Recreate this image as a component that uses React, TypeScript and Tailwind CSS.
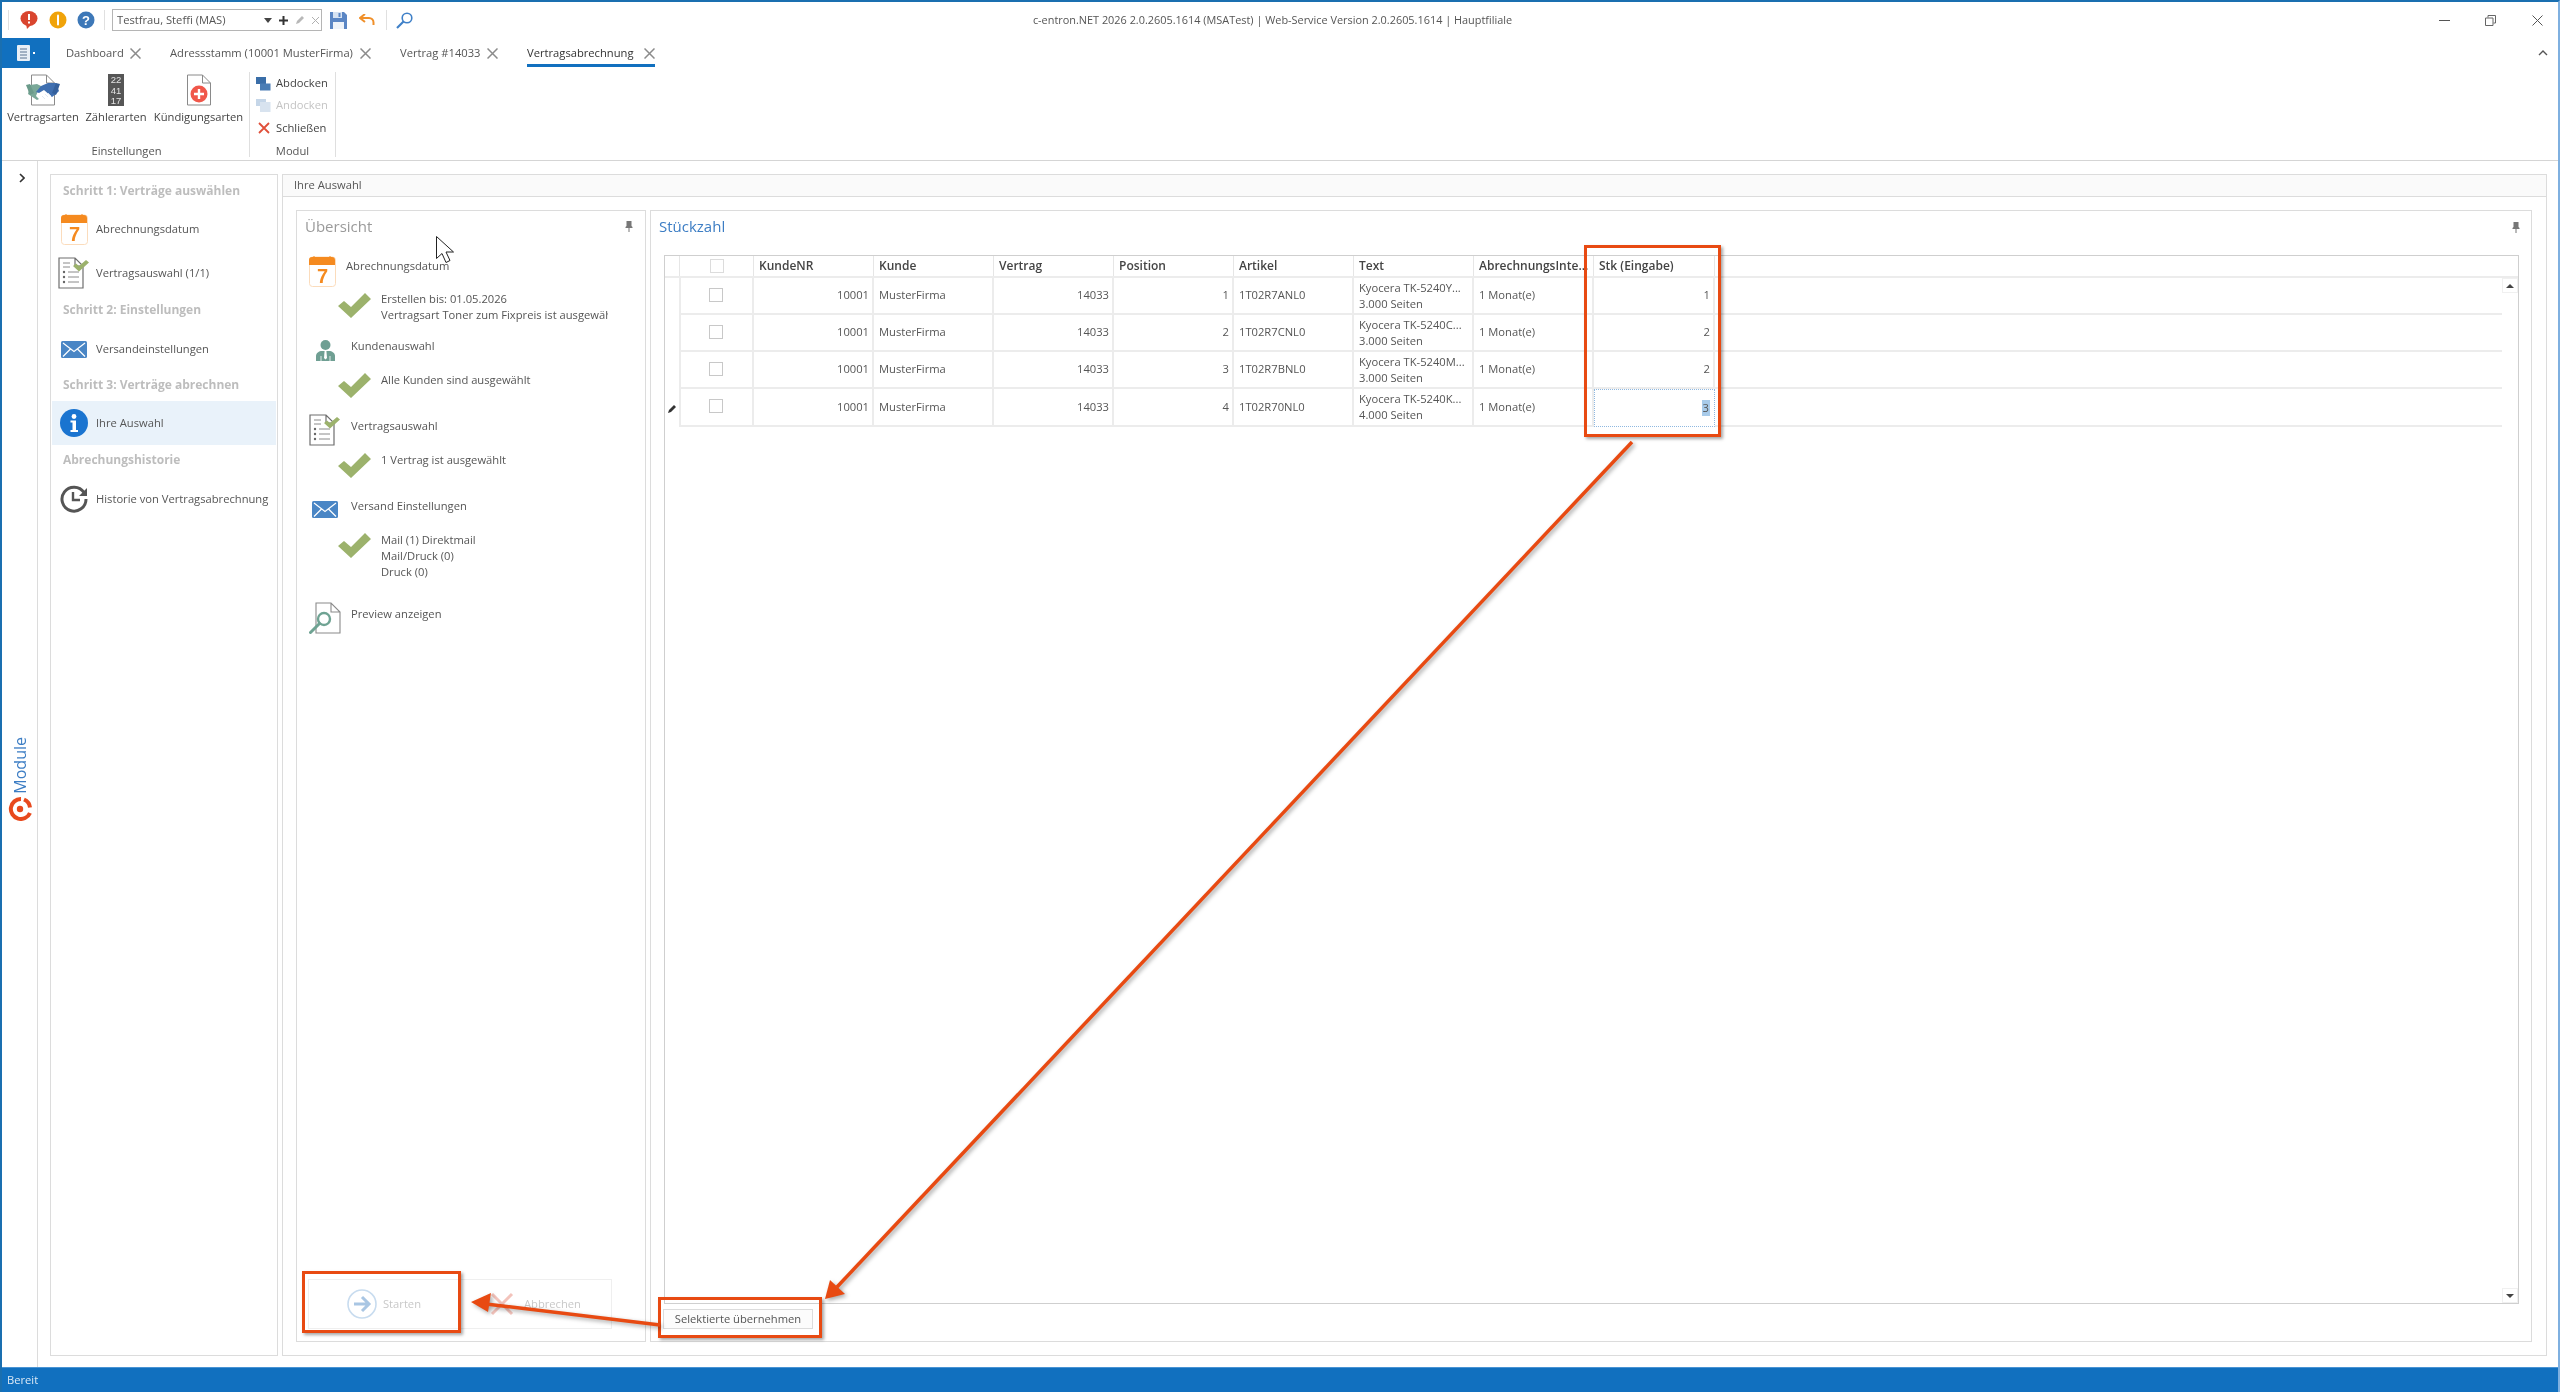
import React from "react";

const PageOutline = ({ stroke = "#8a8a8a" }: { stroke?: string }) => (
  <path d="M1.5 1h15l8 8v22h-23z M16.5 1v8h8" fill="#fff" stroke={stroke} strokeWidth="1" />
);

const Check = ({ className = "" }: { className?: string }) => (
  <svg viewBox="0 0 33 25" className={`w-[33px] h-[25px] shrink-0 ${className}`}>
    <path d="M0 13l6-5 7 6L27 0l6 6-20 19z" fill="#9cb26c" />
  </svg>
);

const Calendar = () => (
  <svg viewBox="0 0 27 31" className="w-[27px] h-[31px] shrink-0">
    <rect x="0.5" y="1" width="26" height="29.5" rx="3" fill="#fff" stroke="#fbdcbc" />
    <path d="M0 9V4a3 3 0 0 1 3-3h1l1-1 1 1h14l1-1 1 1h1a3 3 0 0 1 3 3v5z" fill="#f58a1f" />
    <text x="13.5" y="27" textAnchor="middle" fontFamily="Liberation Sans" fontWeight="700" fontSize="20" fill="#f58a1f">7</text>
  </svg>
);

const ListDoc = () => (
  <svg viewBox="0 0 32 32" className="w-[32px] h-[32px] shrink-0">
    <path d="M1 1h16l8 8v22H1z M17 1v8h8" fill="#fff" stroke="#6e6e6e" strokeWidth="1.2" />
    <path d="M5 6h7M5 10h7M10 15h11M10 20h11M10 25h11" stroke="#8a8a8a" strokeWidth="1" />
    <circle cx="6" cy="15" r="1.2" fill="#666" />
    <circle cx="6" cy="20" r="1.2" fill="#666" />
    <circle cx="6" cy="25" r="1.2" fill="#666" />
    <path d="M15 9l3-2.5 3 2.5 7-6 3 2.5-10 9z" fill="#9cb26c" />
  </svg>
);

const Envelope = ({ w = 26, h = 17 }: { w?: number; h?: number }) => (
  <svg viewBox="0 0 26 17" style={{ width: w, height: h }} className="shrink-0">
    <rect width="26" height="17" rx="1.5" fill="#4a86c5" />
    <path d="M2 2l11 8.5L24 2M2 15.5l7.5-7.5M24 15.5L16.5 8" stroke="#fff" strokeWidth="1.2" fill="none" />
  </svg>
);

const Person = () => (
  <svg viewBox="0 0 19 21" className="w-[19px] h-[21px] shrink-0">
    <circle cx="9.5" cy="5" r="5" fill="#6f9f93" />
    <path d="M0 21v-5c0-3 3-5 6-5h7c3 0 6 2 6 5v5z" fill="#6f9f93" />
    <path d="M8.6 11h1.8l.6 7-1.5 1.5L8 18z" fill="#fff" />
    <path d="M5 16v5M14 16v5" stroke="#fff" strokeWidth="0.8" />
  </svg>
);

const PreviewDoc = () => (
  <svg viewBox="0 0 32 32" className="w-[32px] h-[32px] shrink-0">
    <path d="M7 1h15l9 9v21H7z M22 1v9h9" fill="#fff" stroke="#8a8a8a" strokeWidth="1.1" />
    <circle cx="15" cy="17" r="6" fill="#fff" stroke="#6fa393" strokeWidth="2.4" />
    <path d="M10.5 21.5L1.5 30.5" stroke="#6fa393" strokeWidth="3" strokeLinecap="round" />
  </svg>
);

const Pin = () => (
  <svg viewBox="0 0 8 11" className="w-[8px] h-[11px] shrink-0">
    <path d="M1.5 0h5v5l1 1v1h-3v4h-1V7H.5V6l1-1z" fill="#777" />
  </svg>
);

const SmallX = () => (
  <svg viewBox="0 0 11 11" className="w-[11px] h-[11px] shrink-0">
    <path d="M.5.5l10 10M10.5.5l-10 10" stroke="#8b8b8b" strokeWidth="1.5" />
  </svg>
);

const Docks = ({ light = false }: { light?: boolean }) => (
  <svg viewBox="0 0 15 15" className="w-[15px] h-[15px] shrink-0">
    <rect x="0" y="1" width="10" height="7" fill={light ? "#c5d6e8" : "#3a6ea8"} />
    <rect x="4" y={light ? 4 : 7.5} width="10.5" height={light ? 10 : 7} fill={light ? "#d8e3ef" : "#4a7db5"} />
  </svg>
);

const Logo = () => (
  <svg viewBox="0 0 24 24" className="w-[24px] h-[24px] shrink-0">
    <path d="M13 2a10 10 0 1 0 9 14" fill="none" stroke="#e8491d" strokeWidth="4" />
    <path d="M16 2.5a10 10 0 0 1 6 8" fill="none" stroke="#e8491d" strokeWidth="4" />
    <circle cx="12" cy="12" r="3.2" fill="#e8491d" />
  </svg>
);

const navItems = [
  { t: "h", label: "Schritt 1: Verträge auswählen", m: "mt-[6px]" },
  { t: "r", label: "Abrechnungsdatum", m: "mt-[6px]", icon: <Calendar /> },
  { t: "r", label: "Vertragsauswahl (1/1)", m: "", icon: <ListDoc /> },
  { t: "h", label: "Schritt 2: Einstellungen", m: "mt-[5px]" },
  { t: "r", label: "Versandeinstellungen", m: "mt-[7px]", icon: <Envelope /> },
  { t: "h", label: "Schritt 3: Verträge abrechnen", m: "mt-[4px]" },
  {
    t: "r",
    label: "Ihre Auswahl",
    m: "mt-[6px]",
    active: true,
    icon: (
      <svg viewBox="0 0 28 28" className="w-[28px] h-[28px]">
        <circle cx="14" cy="14" r="14" fill="#1a74d0" />
        <circle cx="14" cy="7.5" r="2.4" fill="#fff" />
        <path d="M10.5 11.5h5.5v9.5h2v2h-7.5v-2h2v-7.5h-2z" fill="#fff" />
      </svg>
    ),
  },
  { t: "h", label: "Abrechungshistorie", m: "mt-[5px]" },
  {
    t: "r",
    label: "Historie von Vertragsabrechnung",
    m: "mt-[7px]",
    icon: (
      <svg viewBox="0 0 28 28" className="w-[28px] h-[28px]">
        <path d="M24 7.5A12 12 0 1 0 26 14" fill="none" stroke="#555" strokeWidth="3" />
        <path d="M27 3v8h-8z" fill="#555" />
        <path d="M13 7v8h7" fill="none" stroke="#555" strokeWidth="2.4" />
      </svg>
    ),
  },
];

const rows = [
  { pos: "1", art: "1T02R7ANL0", text: "Kyocera TK-5240Y...", pages: "3.000 Seiten", stk: "1" },
  { pos: "2", art: "1T02R7CNL0", text: "Kyocera TK-5240C...", pages: "3.000 Seiten", stk: "2" },
  { pos: "3", art: "1T02R7BNL0", text: "Kyocera TK-5240M...", pages: "3.000 Seiten", stk: "2" },
  { pos: "4", art: "1T02R70NL0", text: "Kyocera TK-5240K...", pages: "4.000 Seiten", stk: "3" },
];

const headers = ["KundeNR", "Kunde", "Vertrag", "Position", "Artikel", "Text", "AbrechnungsInte...", "Stk (Eingabe)"];

const COLS = "grid grid-cols-[14px_75px_120px_120px_120px_120px_120px_120px_120px_121px_1fr]";

const Tab = ({ label, w, off, active }: { label: string; w: string; off: string; active?: boolean }) => (
  <div className={`relative h-full flex items-center ${w}`}>
    <span className={`${off} whitespace-nowrap ${active ? "font-medium text-[#333]" : "text-[#555]"}`}>{label}</span>
    <SmallX />
    {active && <div className="absolute left-0 bottom-[1px] w-full h-[3px] bg-[#1170bf]" />}
  </div>
);

const BigButton = ({ w, label, icon }: { w: string; label: string; icon: React.ReactNode }) => (
  <div className={`${w} flex flex-col items-center`}>
    <div className="h-[32px] flex justify-center">{icon}</div>
    <span className="mt-[3px] leading-[16px] text-[#444] whitespace-nowrap">{label}</span>
  </div>
);

const SmallButton = ({ label, icon, muted }: { label: string; icon: React.ReactNode; muted?: boolean }) => (
  <div className={`h-[22.5px] flex items-center gap-[5px] ${muted ? "text-[#c4c4c4]" : "text-[#444]"}`}>
    <span className="w-[15px] flex justify-center">{icon}</span>
    {label}
  </div>
);

const OverHead = ({ m, icon, iconM, label, textM, h, slot = "w-[32px]", gap = "ml-[10px]" }: any) => (
  <div className={`flex items-start pl-[12px] ${m} ${h}`}>
    <div className={`${slot} flex justify-center ${iconM}`}>{icon}</div>
    <span className={`${gap} ${textM} leading-[16px] text-[#555] whitespace-nowrap`}>{label}</span>
  </div>
);

const OverSub = ({ lines, checkM = "mt-[1px]", h = "" }: { lines: string[]; checkM?: string; h?: string }) => (
  <div className={`flex items-start pl-[41px] ${h}`}>
    <Check className={checkM} />
    <div className="ml-[10px] w-[227px] overflow-hidden whitespace-nowrap leading-[16px] text-[#555]">
      {lines.map((l) => (
        <div key={l}>{l}</div>
      ))}
    </div>
  </div>
);

export default function App() {
  return (
    <div className="relative w-[2560px] h-[1392px] overflow-hidden bg-white flex flex-col border-t-2 border-l-2 border-r-2 border-t-[#1a6fb0] border-l-[#1a6fb0] border-r-[#7fb0e0] text-[11.2px] text-[#555] font-['Open_Sans','Noto_Sans',sans-serif] blur-[0.45px]">
      {/* Title bar */}
      <div className="h-[36px] flex items-center shrink-0">
        <div className="flex-1 basis-0 flex items-center">
          <div className="ml-[6px] w-px h-[20px] bg-[#e0e0e0]" />
          <svg viewBox="0 0 18 18" className="ml-[11px] w-[18px] h-[18px]">
            <ellipse cx="9" cy="7.5" rx="8.5" ry="7.5" fill="#d9452f" />
            <path d="M6 13l5 1-4 4z" fill="#d9452f" />
            <rect x="8" y="3" width="2" height="6" fill="#fff" />
            <rect x="8" y="10.5" width="2" height="2" fill="#fff" />
          </svg>
          <svg viewBox="0 0 18 18" className="ml-[11px] w-[18px] h-[18px]">
            <circle cx="9" cy="9" r="8.5" fill="#f0a30a" />
            <rect x="8" y="3.5" width="2" height="11" rx="1" fill="#fff" />
          </svg>
          <svg viewBox="0 0 18 18" className="ml-[10px] w-[18px] h-[18px]">
            <circle cx="9" cy="9" r="8.5" fill="#3d78b8" />
            <text x="9" y="14" textAnchor="middle" fontFamily="Liberation Sans" fontWeight="700" fontSize="13" fill="#fff">?</text>
          </svg>
          <div className="ml-[9px] w-px h-[20px] bg-[#e0e0e0]" />
          <div className="ml-[7px] w-[210px] h-[22px] border border-[#b5b5b5] flex items-center pl-[4px] text-[#555]">
            <span className="w-[147px] whitespace-nowrap overflow-hidden">Testfrau, Steffi (MAS)</span>
            <svg viewBox="0 0 8 5" className="w-[8px] h-[5px]"><path d="M0 0h8L4 5z" fill="#444" /></svg>
            <svg viewBox="0 0 9 9" className="ml-[7px] w-[9px] h-[9px]"><path d="M4.5 0v9M0 4.5h9" stroke="#333" strokeWidth="2" /></svg>
            <svg viewBox="0 0 10 10" className="ml-[7px] w-[10px] h-[10px]"><path d="M1 9l1-3 5-5 2 2-5 5z" fill="#b8b8b8" /></svg>
            <svg viewBox="0 0 9 9" className="ml-[6px] w-[9px] h-[9px]"><path d="M1 1l7 7M8 1L1 8" stroke="#b0b0b0" strokeWidth="1" /></svg>
          </div>
          <svg viewBox="0 0 17 17" className="ml-[8px] w-[17px] h-[17px]">
            <path d="M0 0h14l3 3v14H0z" fill="#5b86c4" />
            <rect x="3" y="0" width="9" height="6" fill="#d7e3f2" />
            <rect x="8.5" y="1" width="2" height="4" fill="#5b86c4" />
            <rect x="3" y="10" width="11" height="7" fill="#eef3f9" />
          </svg>
          <svg viewBox="0 0 16 12" className="ml-[12px] w-[16px] h-[12px]">
            <path d="M2 4h8a4.5 4.5 0 0 1 4.5 4.5V11" fill="none" stroke="#f0902a" strokeWidth="2" />
            <path d="M6 0L1 4l5 4" fill="none" stroke="#f0902a" strokeWidth="2" />
          </svg>
          <div className="ml-[11px] w-px h-[20px] bg-[#e0e0e0]" />
          <svg viewBox="0 0 17 17" className="ml-[9px] w-[17px] h-[17px]">
            <circle cx="11" cy="6" r="4.8" fill="none" stroke="#3f80c8" strokeWidth="1.6" />
            <path d="M7.5 9.5L1 16" stroke="#3f80c8" strokeWidth="2.2" />
          </svg>
        </div>
        <div className="whitespace-nowrap text-[10.9px] text-[#555] text-center">c-entron.NET 2026 2.0.2605.1614 (MSATest) | Web-Service Version 2.0.2605.1614 | Hauptfiliale</div>
        <div className="flex-1 basis-0 flex items-center justify-end pr-[15px]">
          <div className="w-[11px] h-px bg-[#555]" />
          <svg viewBox="0 0 11 11" className="ml-[35px] w-[11px] h-[11px]">
            <path d="M3 2.5V.5h7.5V8H8.5M.5 3h7.5v7.5H.5z" fill="none" stroke="#666" strokeWidth="1" />
          </svg>
          <svg viewBox="0 0 11 11" className="ml-[36px] w-[11px] h-[11px]">
            <path d="M.5.5l10 10M10.5.5l-10 10" stroke="#555" strokeWidth="1" />
          </svg>
        </div>
      </div>

      {/* Tabs */}
      <div className="h-[30px] flex items-center shrink-0">
        <div className="w-[48px] h-full bg-[#1170bf] flex items-center justify-center gap-[3px]">
          <svg viewBox="0 0 13 16" className="w-[13px] h-[16px]">
            <rect width="13" height="16" rx="1" fill="#e9eff6" />
            <path d="M3 4h7M3 7h7M3 10h7M3 13h7" stroke="#5a7390" strokeWidth="1" />
          </svg>
          <div className="w-[2px] h-[2px] bg-white" />
        </div>
        <div className="ml-[16px] h-full flex">
          <Tab label="Dashboard" w="w-[104px]" off="w-[64px]" />
          <Tab label="Adressstamm (10001 MusterFirma)" w="w-[230px]" off="w-[190px]" />
          <Tab label="Vertrag #14033" w="w-[127px]" off="w-[87px]" />
          <Tab label="Vertragsabrechnung" w="w-[128px]" off="w-[117px]" active />
        </div>
        <svg viewBox="0 0 10 6" className="ml-auto mr-[10px] w-[10px] h-[6px]">
          <path d="M1 5l4-4 4 4" fill="none" stroke="#555" strokeWidth="1.4" />
        </svg>
      </div>

      {/* Ribbon */}
      <div className="h-[93px] border-b border-[#d5d5d5] flex items-start pt-[4px] shrink-0">
        <div className="w-[248px] h-[85px] border-r border-[#dfdfdf] flex flex-col pl-[2px]">
          <div className="flex pt-[2px]">
            <BigButton
              w="w-[78px]"
              label="Vertragsarten"
              icon={
                <svg viewBox="0 0 36 32" className="w-[36px] h-[32px]">
                  <g transform="translate(5 0)"><PageOutline /></g>
                  <path d="M5 11l7-1 6 3-5 4-2 5 3 3-2 1-9-6z" fill="#7aa898" />
                  <path d="M1 11l4-1 4 9-4 2z" fill="#6b9a8a" />
                  <path d="M31 9l-8 0-7 3-5 6 3 1 5-3 8 7 4-3 3-3z" fill="#3f6fb0" />
                  <path d="M35 10l-4-1-4 10 4 2z" fill="#34609c" />
                  <path d="M17 22l3 3M20 20l3 3M23 19l3 3" stroke="#dfe8f2" strokeWidth="0.9" />
                </svg>
              }
            />
            <BigButton
              w="w-[68px]"
              label="Zählerarten"
              icon={
                <svg viewBox="0 0 16 32" className="w-[16px] h-[32px]">
                  <rect width="16" height="32" fill="#565656" />
                  <text x="8" y="9" textAnchor="middle" fontFamily="Liberation Sans" fontSize="9.5" fill="#e4e4e4">22</text>
                  <text x="8" y="19.5" textAnchor="middle" fontFamily="Liberation Sans" fontSize="9.5" fill="#e4e4e4">41</text>
                  <text x="8" y="30" textAnchor="middle" fontFamily="Liberation Sans" fontSize="9.5" fill="#e4e4e4">17</text>
                </svg>
              }
            />
            <BigButton
              w="w-[97px]"
              label="Kündigungsarten"
              icon={
                <svg viewBox="0 0 26 32" className="w-[26px] h-[32px]">
                  <PageOutline />
                  <circle cx="13" cy="20" r="8.5" fill="#f0574a" />
                  <path d="M13 15v10M8 20h10" stroke="#fff" strokeWidth="2.4" />
                </svg>
              }
            />
          </div>
          <div className="mt-auto leading-[12px] text-center text-[#555]">Einstellungen</div>
        </div>
        <div className="w-[86px] h-[85px] border-r border-[#dfdfdf] flex flex-col pl-[6px]">
          <SmallButton label="Abdocken" icon={<Docks />} />
          <SmallButton label="Andocken" muted icon={<Docks light />} />
          <SmallButton
            label="Schließen"
            icon={
              <svg viewBox="0 0 12 12" className="w-[12px] h-[12px]">
                <path d="M1 1l10 10M11 1L1 11" stroke="#e0503a" strokeWidth="1.8" />
              </svg>
            }
          />
          <div className="mt-auto leading-[12px] text-center pr-[6px] text-[#555]">Modul</div>
        </div>
      </div>

      {/* Body */}
      <div className="flex-1 min-h-0 flex">
        <div className="w-[36px] border-r border-[#dcdcdc] flex flex-col items-center pt-[12px]">
          <svg viewBox="0 0 6 10" className="ml-[5px] w-[6px] h-[10px]">
            <path d="M1 1l4 4-4 4" fill="none" stroke="#333" strokeWidth="1.6" />
          </svg>
          <div className="mt-[554px] text-[16px] leading-[18px] text-[#3c7dc4] [writing-mode:vertical-rl] rotate-180 whitespace-nowrap">Module</div>
          <div className="mt-[3px]"><Logo /></div>
        </div>

        <div className="ml-[12px] mt-[13px] mb-[11px] flex">
          {/* Nav */}
          <div className="w-[228px] h-full border border-[#dcdcdc] px-px">
            {navItems.map((n) =>
              n.t === "h" ? (
                <div key={n.label} className={`h-[20px] ${n.m} pl-[11px] flex items-center font-bold text-[12px] text-[#bdbdbd] whitespace-nowrap`}>
                  {n.label}
                </div>
              ) : (
                <div key={n.label} className={`h-[44px] ${n.m} flex items-center whitespace-nowrap text-[#555] ${n.active ? "bg-[#e9f2fa]" : ""}`}>
                  <div className="w-[44px] flex justify-center">{n.icon}</div>
                  {n.label}
                </div>
              )
            )}
          </div>

          {/* Main */}
          <div className="ml-[4px] w-[2265px] h-full border border-[#dcdcdc] flex flex-col">
            <div className="h-[22px] bg-[#fafafa] border-b border-[#dcdcdc] flex items-center pl-[11px] shrink-0">Ihre Auswahl</div>
            <div className="mt-[13px] ml-[13px] flex gap-[4px] h-[1132px]">
              {/* Übersicht */}
              <div className="w-[350px] h-full border border-[#dcdcdc] flex flex-col">
                <div className="h-[45px] flex items-start pl-[8px] pr-[12px] pt-[4px] shrink-0">
                  <span className="text-[15px] leading-[22px] text-[#9a9a9a]">Übersicht</span>
                  <span className="ml-auto mt-[6px]"><Pin /></span>
                </div>
                <OverHead m="" h="h-[35px]" slot="w-[26px]" gap="ml-[11px]" iconM="" textM="mt-[2px]" icon={<Calendar />} label="Abrechnungsdatum" />
                <OverSub checkM="mt-[2px]" h="h-[33px]" lines={["Erstellen bis: 01.05.2026", "Vertragsart Toner zum Fixpreis ist ausgewählt"]} />
                <OverHead m="mt-[14px]" h="h-[34px]" iconM="mt-[2px]" textM="" icon={<Person />} label="Kundenauswahl" />
                <OverSub h="h-[27px]" lines={["Alle Kunden sind ausgewählt"]} />
                <OverHead m="mt-[15px]" h="h-[38px]" iconM="" textM="mt-[4px]" icon={<ListDoc />} label="Vertragsauswahl" />
                <OverSub h="h-[27px]" lines={["1 Vertrag ist ausgewählt"]} />
                <OverHead m="mt-[19px]" h="h-[34px]" iconM="mt-[3px]" textM="" icon={<Envelope />} label="Versand Einstellungen" />
                <OverSub h="h-[48px]" lines={["Mail (1) Direktmail", "Mail/Druck (0)", "Druck (0)"]} />
                <OverHead m="mt-[22px]" h="h-[32px]" iconM="" textM="mt-[4px]" icon={<PreviewDoc />} label="Preview anzeigen" />

                <div className="mt-auto mb-[12px] ml-[11px] flex h-[50px] text-[#c8c8c8]">
                  <div className="w-[152px] border border-[#efefef] flex items-center justify-center gap-[6px]">
                    <svg viewBox="0 0 30 30" className="w-[30px] h-[30px]">
                      <circle cx="15" cy="15" r="14" fill="#fff" stroke="#c8dcef" strokeWidth="1.6" />
                      <path d="M7 15h14M15 8l7 7-7 7" fill="none" stroke="#a9c6e3" strokeWidth="3" />
                    </svg>
                    Starten
                  </div>
                  <div className="w-[152px] border border-l-0 border-[#efefef] flex items-center justify-center gap-[10px]">
                    <svg viewBox="0 0 24 24" className="w-[24px] h-[24px]">
                      <path d="M2 2l20 20M22 2L2 22" stroke="#f3c3bb" strokeWidth="3" />
                    </svg>
                    Abbrechen
                  </div>
                </div>
              </div>

              {/* Stückzahl */}
              <div className="w-[1882px] h-full border border-[#dcdcdc] flex flex-col">
                <div className="h-[44px] flex items-start pl-[8px] pr-[11px] pt-[4px] shrink-0">
                  <span className="text-[15px] leading-[22px] text-[#3c7dc4]">Stückzahl</span>
                  <span className="ml-auto mt-[7px]"><Pin /></span>
                </div>
                <div className="ml-[13px] w-[1855px] h-[1049px] border border-[#cfcfcf] flex flex-col">
                  <div className={`${COLS} h-[22px] border-b-2 border-[#ececec] shrink-0`}>
                    <div className="col-span-1" />
                    <div className="border-l border-r border-[#e6e6e6] flex items-center justify-center">
                      <div className="w-[14px] h-[14px] border border-[#dcdcdc]" />
                    </div>
                    {headers.map((h) => (
                      <div key={h} className="border-r border-[#e6e6e6] flex items-center pl-[5px] font-semibold text-[12px] text-[#444] whitespace-nowrap overflow-hidden">
                        {h}
                      </div>
                    ))}
                  </div>
                  <div className="flex-1 flex min-h-0">
                    <div className="w-[1837px]">
                      {rows.map((r, i) => (
                        <div key={r.pos} className={`${COLS} ${i === 3 ? "h-[38px]" : "h-[37px]"}`}>
                          <div className="flex items-center justify-center">
                            {i === 3 && (
                              <svg viewBox="0 0 9 9" className="w-[9px] h-[9px]">
                                <path d="M0 9l1-3 5-5 2 2-5 5z" fill="#333" />
                              </svg>
                            )}
                          </div>
                          <div className="border-l-2 border-r-2 border-b-2 border-[#ececec] flex items-center justify-center">
                            <div className="w-[14px] h-[14px] mb-[2px] mr-[1px] border border-[#c8c8c8]" />
                          </div>
                          <div className="border-r-2 border-b-2 border-[#ececec] flex items-center justify-end pr-[3px]">10001</div>
                          <div className="border-r-2 border-b-2 border-[#ececec] flex items-center pl-[5px]">MusterFirma</div>
                          <div className="border-r-2 border-b-2 border-[#ececec] flex items-center justify-end pr-[3px]">14033</div>
                          <div className="border-r-2 border-b-2 border-[#ececec] flex items-center justify-end pr-[3px]">{r.pos}</div>
                          <div className="border-r-2 border-b-2 border-[#ececec] flex items-center pl-[5px]">{r.art}</div>
                          <div className="border-r-2 border-b-2 border-[#ececec] flex flex-col justify-center pl-[5px] leading-[16px] whitespace-nowrap overflow-hidden">
                            <div>{r.text}</div>
                            <div>{r.pages}</div>
                          </div>
                          <div className="border-r-2 border-b-2 border-[#ececec] flex items-center pl-[5px]">1 Monat(e)</div>
                          {i === 3 ? (
                            <div className="border border-dotted border-[#8fb8e0] flex items-center justify-end pr-[4px]">
                              <span className="px-px bg-[#a8cbea] text-[#555]">{r.stk}</span>
                            </div>
                          ) : (
                            <div className="border-r-2 border-b-2 border-[#ececec] flex items-center justify-end pr-[3px]">{r.stk}</div>
                          )}
                          <div className="border-b-2 border-[#ececec]" />
                        </div>
                      ))}
                    </div>
                    <div className="w-[16px] flex flex-col justify-between">
                      <div className="h-[15px] border border-[#f0f0f0] flex items-center justify-center">
                        <svg viewBox="0 0 8 4" className="w-[8px] h-[4px]"><path d="M4 0l4 4H0z" fill="#444" /></svg>
                      </div>
                      <div className="h-[15px] border border-[#f0f0f0] flex items-center justify-center">
                        <svg viewBox="0 0 8 4" className="w-[8px] h-[4px]"><path d="M0 0h8L4 4z" fill="#444" /></svg>
                      </div>
                    </div>
                  </div>
                </div>
                <div className="mt-[5px] ml-[12px] w-[150px] h-[20px] border border-[#dcdcdc] bg-[#fcfcfc] flex items-center justify-center text-[#555] whitespace-nowrap">
                  Selektierte übernehmen
                </div>
              </div>
            </div>
          </div>
        </div>
      </div>

      {/* Status */}
      <div className="h-[25px] bg-[#1170bf] border-t border-[#4a94d4] flex items-center pl-[5px] text-[#dbe8f5] shrink-0">Bereit</div>

      {/* Annotations */}
      <div className="absolute left-[1582px] top-[243px] w-[137px] h-[192px] border-[3px] border-[#e84a12] shadow-[2px_2px_3px_rgba(0,0,0,0.35)]" />
      <div className="absolute left-[300px] top-[1269px] w-[159px] h-[62px] border-[3px] border-[#e84a12] shadow-[2px_2px_3px_rgba(0,0,0,0.35)]" />
      <div className="absolute left-[656px] top-[1295px] w-[164px] h-[41px] border-[3px] border-[#e84a12] shadow-[2px_2px_3px_rgba(0,0,0,0.35)]" />
      <svg className="absolute left-0 top-0 w-[2556px] h-[1390px] pointer-events-none drop-shadow-[2px_2px_2px_rgba(0,0,0,0.35)]" viewBox="-2 -2 2556 1390">
        <path d="M1628 438L833 1283" stroke="#e84a12" strokeWidth="3.5" />
        <path d="M821 1295L826 1276 841 1290z" fill="#e84a12" />
        <path d="M656 1321L482 1300" stroke="#e84a12" strokeWidth="3.5" />
        <path d="M467 1298L487 1289 484 1308z" fill="#e84a12" />
      </svg>
      {/* Cursor */}
      <svg viewBox="0 0 18 27" className="absolute left-[434px] top-[234px] w-[18px] h-[27px]">
        <path d="M.5.5v22l5.5-5 4 9 4-2-4-8.5h7.5z" fill="#fff" stroke="#222" strokeWidth="1" />
      </svg>
    </div>
  );
}
